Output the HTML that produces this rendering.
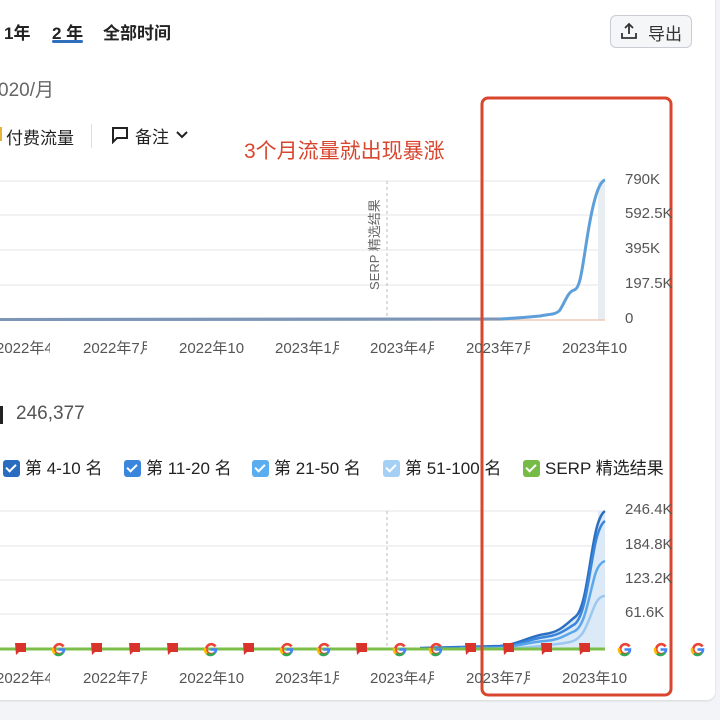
<!DOCTYPE html>
<html><head><meta charset="utf-8"><style>
html,body{margin:0;padding:0}
body{width:720px;height:720px;background:#f3f4f7;position:relative;overflow:hidden;font-family:"Liberation Sans","Noto Sans CJK SC",sans-serif;color:#222}
.card{position:absolute;left:-10px;top:-10px;width:725px;height:710px;background:#fff;border-radius:8px;box-shadow:0 1px 2px rgba(0,0,0,.12)}
.t{position:absolute;white-space:nowrap}
.lab{position:absolute;font-size:15px;color:#555;white-space:nowrap;overflow:hidden}
.yl{position:absolute;font-size:15px;color:#555;white-space:nowrap}
.cb{display:inline-block;width:17px;height:17px;border-radius:3px;vertical-align:-3px;margin-right:5px;position:relative}
.cb:after{content:"";position:absolute;left:5px;top:2px;width:4px;height:8px;border:solid #fff;border-width:0 2px 2px 0;transform:rotate(45deg)}
.leg{position:absolute;top:454px;font-size:17px;color:#222;white-space:nowrap}
</style></head><body>
<div class="card"></div>
<div class="t" style="left:4px;top:19px;font-size:17px;font-weight:bold">1年</div>
<div class="t" style="left:52px;top:19px;font-size:17px;font-weight:bold">2 年</div>
<div style="position:absolute;left:52px;top:40px;width:31px;height:3px;background:#2f6fbd;border-radius:2px"></div>
<div class="t" style="left:103px;top:19px;font-size:17px;font-weight:bold">全部时间</div>
<div style="position:absolute;left:610px;top:15px;width:80px;height:31px;border:1px solid #c9ccd2;border-radius:6px;background:#f5f6f8"></div>
<svg style="position:absolute;left:620px;top:22px" width="18" height="18" viewBox="0 0 18 18" fill="none" stroke="#333" stroke-width="1.8"><path d="M9 12V2M5 6l4-4 4 4M2 11v5h14v-5"/></svg>
<div class="t" style="left:648px;top:20px;font-size:17px;color:#333">导出</div>
<div class="t" style="left:-2px;top:75px;font-size:19px;color:#666">020/月</div>
<div style="position:absolute;left:0;top:127px;width:2px;height:14px;background:#e8b33a"></div>
<div class="t" style="left:6px;top:124px;font-size:17px;color:#222">付费流量</div>
<div style="position:absolute;left:91px;top:124px;width:1px;height:24px;background:#ddd"></div>
<svg style="position:absolute;left:111px;top:126px" width="18" height="18" viewBox="0 0 18 18" fill="none" stroke="#222" stroke-width="2"><path d="M2 2h14v10H6l-4 4z"/></svg>
<div class="t" style="left:135px;top:123px;font-size:17px;color:#222">备注</div>
<svg style="position:absolute;left:176px;top:131px" width="12" height="8" viewBox="0 0 12 8" fill="none" stroke="#222" stroke-width="2"><path d="M1 1l5 5 5-5"/></svg>
<div class="t" style="left:244px;top:135px;font-size:21px;color:#d9462e">3个月流量就出现暴涨</div>

<svg style="position:absolute;left:0;top:0" width="720" height="720">
<g stroke="#e4e6ea" stroke-width="1">
<line x1="0" y1="181" x2="605" y2="181"/><line x1="0" y1="215" x2="605" y2="215"/><line x1="0" y1="250" x2="605" y2="250"/><line x1="0" y1="285" x2="605" y2="285"/>
<line x1="0" y1="511" x2="605" y2="511"/><line x1="0" y1="546" x2="605" y2="546"/><line x1="0" y1="580" x2="605" y2="580"/><line x1="0" y1="614" x2="605" y2="614"/>
</g>
<line x1="387" y1="181" x2="387" y2="320" stroke="#bbb" stroke-dasharray="3,3"/>
<line x1="387" y1="511" x2="387" y2="648" stroke="#bbb" stroke-dasharray="3,3"/>
<rect x="598" y="181" width="7" height="139" fill="#e8edf2"/>
<rect x="598" y="511" width="7" height="138" fill="#e2ebf5"/>
<line x1="0" y1="320" x2="605" y2="320" stroke="#f0c8b8" stroke-width="1.5"/>
<path d="M0 319.5 L500 319 C520 318 530 317 540 316 C548 314 556 315 560 310 C566 300 568 292 574 290 C580 289 582 270 586 245 C592 205 598 182 605 180" fill="none" stroke="#5f9fd9" stroke-width="3"/>
<path d="M0 319.5 L500 319" stroke="#7d96b5" stroke-width="3"/>
<path d="M420 648 L500 646 C520 644 530 636 545 634 C560 632 565 625 575 617 C585 610 588 570 595 535 C598 520 602 513 605 511 L605 649 L420 649Z" fill="#dce9f7"/>
<path d="M420 648 L500 646 C520 644 530 636 545 634 C560 632 565 625 575 617 C585 610 588 570 595 535 C598 520 602 513 605 511" fill="none" stroke="#2c6fc0" stroke-width="2.5"/>
<path d="M440 648 L500 647 C520 645 530 639 545 637 C560 635 565 630 575 624 C585 615 588 580 595 545 C598 530 602 523 605 521" fill="none" stroke="#3a86dc" stroke-width="2.5"/>
<path d="M460 648 L500 648 C520 646 530 642 545 641 C560 640 565 635 575 631 C585 625 588 600 595 575 C598 565 602 562 605 561" fill="none" stroke="#5aa7ea" stroke-width="2.5"/>
<path d="M480 649 L520 648 C540 646 555 645 570 642 C585 639 588 620 595 605 C598 598 602 596 605 596" fill="none" stroke="#9cc8f0" stroke-width="2.5"/>
<line x1="0" y1="649" x2="605" y2="649" stroke="#7bbf4a" stroke-width="3"/>
<g fill="#d9342b">
<path id="f" d="M15 643h11v9h-7l-3 3z"/>
<use href="#f" x="76"/><use href="#f" x="114"/><use href="#f" x="152"/><use href="#f" x="228"/><use href="#f" x="341"/><use href="#f" x="450"/><use href="#f" x="488"/><use href="#f" x="526"/><use href="#f" x="564"/>
</g>
<g id="gg" fill="none" stroke-width="2.6">
<path d="M63.5 646.5 A5 5 0 1 0 62.5 653" stroke="#ea4335"/>
<path d="M58.5 649.5h5.5a5 5 0 0 1-1.5 3.5" stroke="#4285f4"/>
<path d="M53.2 648 A5 5 0 0 0 55 653.6" stroke="#fbbc05"/>
<path d="M55 653.6 A5 5 0 0 0 62.5 653" stroke="#34a853"/>
</g>
<use href="#gg" x="152"/><use href="#gg" x="228"/><use href="#gg" x="265"/><use href="#gg" x="341"/><use href="#gg" x="377"/><use href="#gg" x="566"/><use href="#gg" x="602"/><use href="#gg" x="639"/>
<rect x="482" y="98" width="189" height="597" rx="6" fill="none" stroke="#d9462e" stroke-width="3"/>
</svg>
<div class="t" style="left:364px;top:290px;font-size:13px;color:#666;transform:rotate(-90deg);transform-origin:0 0">SERP 精选结果</div>
<div class="yl" style="left:625px;top:171px">790K</div>
<div class="yl" style="left:625px;top:205px">592.5K</div>
<div class="yl" style="left:625px;top:240px">395K</div>
<div class="yl" style="left:625px;top:275px">197.5K</div>
<div class="yl" style="left:625px;top:310px">0</div>
<div class="yl" style="left:625px;top:501px">246.4K</div>
<div class="yl" style="left:625px;top:536px">184.8K</div>
<div class="yl" style="left:625px;top:570px">123.2K</div>
<div class="yl" style="left:625px;top:604px">61.6K</div>
<div class="lab" style="left:-4px;top:337px;width:54px">2022年4月</div>
<div class="lab" style="left:83px;top:337px;width:64px">2022年7月</div>
<div class="lab" style="left:179px;top:337px;width:66px">2022年10</div>
<div class="lab" style="left:275px;top:337px;width:64px">2023年1月</div>
<div class="lab" style="left:370px;top:337px;width:64px">2023年4月</div>
<div class="lab" style="left:466px;top:337px;width:64px">2023年7月</div>
<div class="lab" style="left:562px;top:337px;width:66px">2023年10</div>
<div class="lab" style="left:-4px;top:667px;width:54px">2022年4月</div>
<div class="lab" style="left:83px;top:667px;width:64px">2022年7月</div>
<div class="lab" style="left:179px;top:667px;width:66px">2022年10</div>
<div class="lab" style="left:275px;top:667px;width:64px">2023年1月</div>
<div class="lab" style="left:370px;top:667px;width:64px">2023年4月</div>
<div class="lab" style="left:466px;top:667px;width:64px">2023年7月</div>
<div class="lab" style="left:562px;top:667px;width:66px">2023年10</div>
<div style="position:absolute;left:0;top:406px;width:3px;height:18px;background:#222"></div>
<div class="t" style="left:16px;top:403px;font-size:19px;color:#555">246,377</div>
<div class="leg" style="left:3px"><span class="cb" style="background:#2a6cc0"></span>第 4-10 名</div>
<div class="leg" style="left:124px"><span class="cb" style="background:#3a86dc"></span>第 11-20 名</div>
<div class="leg" style="left:252px"><span class="cb" style="background:#5aaeef"></span>第 21-50 名</div>
<div class="leg" style="left:383px"><span class="cb" style="background:#a5d0f5"></span>第 51-100 名</div>
<div class="leg" style="left:523px"><span class="cb" style="background:#76bb45"></span>SERP 精选结果</div>
</body></html>
